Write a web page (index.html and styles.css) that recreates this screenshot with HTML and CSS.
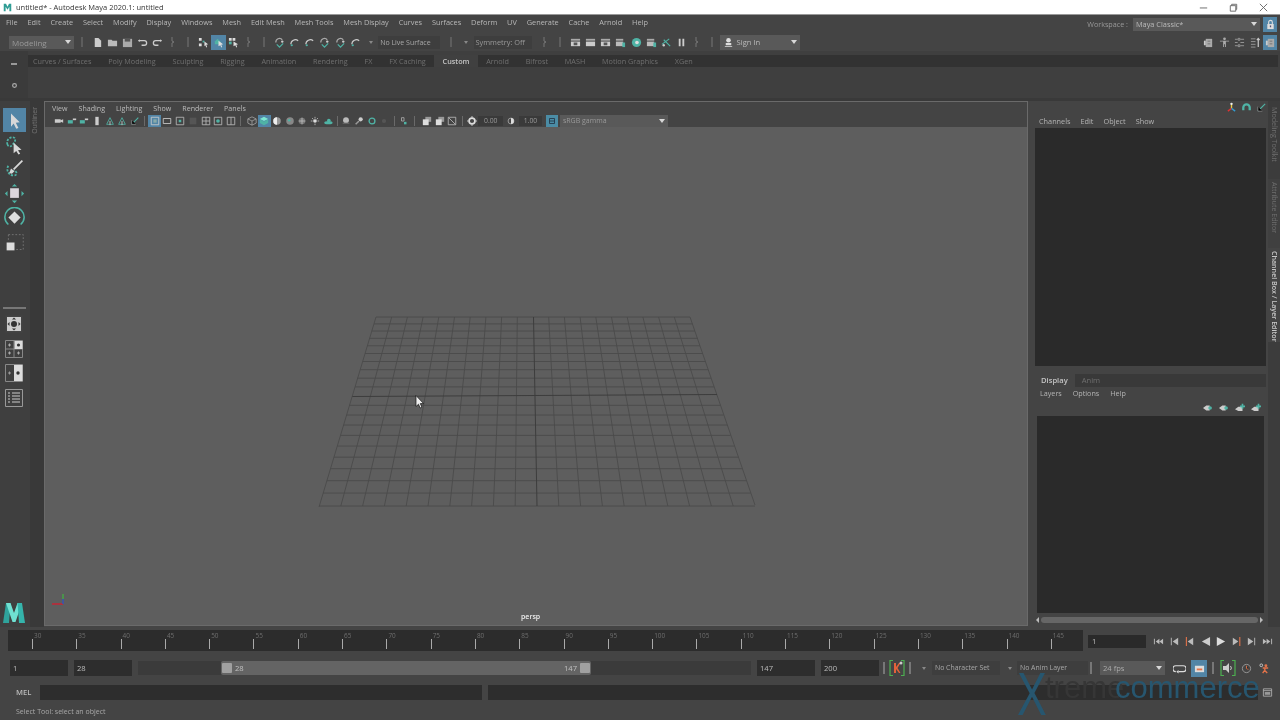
FILE: index.html
```html
<!DOCTYPE html>
<html lang="en">
<head>
<meta charset="utf-8">
<title>untitled* - Autodesk Maya 2020.1: untitled</title>
<link rel="stylesheet" href="styles.css">
</head>
<body>
<svg class="defs" aria-hidden="true">
  <symbol id="file" viewBox="0 0 12 12"><path fill="#ccc" d="M3 1h4l3 3v7H3z"/></symbol>
  <symbol id="open" viewBox="0 0 12 12"><path fill="#bbb" d="M1 3h4l1 1h5v6H1z"/></symbol>
  <symbol id="save" viewBox="0 0 12 12"><path fill="#aaa" d="M1 2h10v9H1z"/><path fill="#555" d="M3 2h6v3H3z"/></symbol>
  <symbol id="undo" viewBox="0 0 12 12"><path fill="none" stroke="#ccc" stroke-width="1.4" d="M2 4h6a2.5 2.5 0 0 1 0 5H5"/><path fill="#ccc" d="M1 4l2-1.5v3z"/></symbol>
  <symbol id="redo" viewBox="0 0 12 12"><path fill="none" stroke="#ccc" stroke-width="1.4" d="M10 4H4a2.5 2.5 0 0 0 0 5h3"/><path fill="#ccc" d="M11 4L9 2.5v3z"/></symbol>
  <symbol id="sep" viewBox="0 0 6 12"><path stroke="#777" stroke-width="1" d="M3 1v10"/></symbol>
  <symbol id="hnd" viewBox="0 0 6 12"><path fill="none" stroke="#777" stroke-width="1" d="M2 1v4l2 1-2 1v4"/></symbol>
  <symbol id="hier" viewBox="0 0 12 12"><path fill="#ddd" d="M1 1h3v3H1zM1 7h3v3H1z"/><path fill="#4fb3a5" d="M5 4h2v2H5z"/><path fill="#ddd" d="M7 5l4 3-2 .5 1 2.500-1 .5-1-2.500-1 1z"/></symbol>
  <symbol id="objs" viewBox="0 0 12 12"><path fill="#4fb3a5" d="M2 5l3-3 3 3v3H2z"/><path fill="#ddd" d="M6 4l5 4-2 .5 1 2.500-1 .5-1-2.500-2 1z"/></symbol>
  <symbol id="comp" viewBox="0 0 12 12"><path fill="#ddd" d="M1 1h3v3H1zM5 1h3v3H5z"/><path fill="#4fb3a5" d="M1 5h3v3H1z"/><path fill="#ddd" d="M6 5l5 3-2 .5 1 2.500-1 .5-1-2.500-2 1z"/></symbol>
  <symbol id="snap" viewBox="0 0 12 12"><path fill="none" stroke="#aaa" stroke-width="1.300" d="M2 6a4 4 0 0 1 7-3"/><path fill="none" stroke="#4fb3a5" stroke-width="1.300" d="M3 8l3 3 4-4"/><circle cx="9" cy="5" r="1.300" fill="#ccc"/></symbol>
  <symbol id="snap2" viewBox="0 0 12 12"><path fill="none" stroke="#ccc" stroke-width="1.300" d="M2 8a5 5 0 0 1 8-4"/><circle cx="3" cy="9" r="1.200" fill="#4fb3a5"/></symbol>
  <symbol id="rend" viewBox="0 0 12 12"><path fill="#aaa" d="M1 2h10v2H1z"/><path fill="#ccc" d="M1 5h10v5H1z"/><path fill="#555" d="M4 6h4v3H4z"/></symbol>
  <symbol id="rend2" viewBox="0 0 12 12"><path fill="#aaa" d="M1 2h10v2H1z"/><path fill="#ccc" d="M1 5h10v5H1z"/></symbol>
  <symbol id="rend3" viewBox="0 0 12 12"><path fill="#aaa" d="M1 2h8v2H1z"/><path fill="#bbb" d="M1 5h8v5H1z"/><path fill="#4fb3a5" d="M8 6h3v5H8z"/></symbol>
  <symbol id="ipr" viewBox="0 0 12 12"><circle cx="6" cy="6" r="5" fill="#4fb3a5"/><circle cx="6.500" cy="6" r="2" fill="#ddd"/></symbol>
  <symbol id="scis" viewBox="0 0 12 12"><path stroke="#4fb3a5" stroke-width="1.200" fill="none" d="M1 8l8-6M3 3l7 7"/><circle cx="3" cy="9" r="1.300" fill="#ccc"/></symbol>
  <symbol id="pause" viewBox="0 0 12 12"><path fill="#ccc" d="M3 2h2v8H3zM7 2h2v8H7z"/></symbol>
  <symbol id="cam" viewBox="0 0 12 12"><path fill="#ccc" d="M1 4h7v4H1zM8 5l3-1v4L8 7z"/></symbol>
  <symbol id="cam2" viewBox="0 0 12 12"><path fill="#4fb3a5" d="M1 5h6v4H1z"/><path fill="#ccc" d="M7 3h4v2H7z"/></symbol>
  <symbol id="bkm" viewBox="0 0 12 12"><path fill="#ccc" d="M4 1h4v10H4z"/></symbol>
  <symbol id="grid" viewBox="0 0 12 12"><path fill="none" stroke="#4fb3a5" stroke-width="1" d="M2 10l4-8 4 8z"/><path stroke="#ccc" d="M6 6v5"/></symbol>
  <symbol id="box" viewBox="0 0 12 12"><path fill="none" stroke="#ccc" stroke-width="1" d="M1.500 1.500h9v9h-9z"/><path fill="#8aa" d="M4 4h4v4H4z"/></symbol>
  <symbol id="box2" viewBox="0 0 12 12"><path fill="none" stroke="#ccc" stroke-width="1" d="M1.500 3h9v6h-9z"/></symbol>
  <symbol id="box3" viewBox="0 0 12 12"><path fill="none" stroke="#bbb" stroke-width="1" d="M1.500 1.500h9v9h-9z"/><path fill="#4fb3a5" d="M4.500 4.500h3v3h-3z"/></symbol>
  <symbol id="box4" viewBox="0 0 12 12"><path fill="#555" d="M2 2h8v8H2z"/></symbol>
  <symbol id="box5" viewBox="0 0 12 12"><path fill="none" stroke="#bbb" stroke-width="1" d="M1.500 1.500h9v9h-9zM6 1.500v9M1.500 6h9"/></symbol>
  <symbol id="box6" viewBox="0 0 12 12"><path fill="none" stroke="#bbb" stroke-width="1" d="M1.500 1.500h9v9h-9z"/><circle cx="6" cy="6" r="2.200" fill="#4fb3a5"/></symbol>
  <symbol id="box7" viewBox="0 0 12 12"><path fill="none" stroke="#bbb" stroke-width="1" d="M1.500 1.500h9v9h-9zM6 1.500v9"/></symbol>
  <symbol id="wire" viewBox="0 0 12 12"><path fill="none" stroke="#aaa" stroke-width=".9" d="M6 1l5 2.500v5L6 11 1 8.500v-5zM1 3.500l5 2.500 5-2.500M6 6v5"/></symbol>
  <symbol id="cube" viewBox="0 0 12 12"><path fill="#8fd" fill-opacity=".8" d="M6 1l5 2.500-5 2.500-5-2.500z"/><path fill="#4fb3a5" d="M1 4l5 2.500V11L1 8.500zM11 4L6 6.500V11l5-2.500z"/></symbol>
  <symbol id="ball" viewBox="0 0 12 12"><circle cx="6" cy="6" r="4.500" fill="#999"/><path fill="#eee" d="M6 1.500a4.500 4.500 0 0 0 0 9z"/></symbol>
  <symbol id="ball2" viewBox="0 0 12 12"><circle cx="6" cy="6" r="4.500" fill="#888"/><circle cx="5" cy="5" r="1.500" fill="#4fb3a5"/></symbol>
  <symbol id="ball3" viewBox="0 0 12 12"><circle cx="6" cy="6" r="4" fill="#777"/><path stroke="#bbb" d="M2 6h8M6 2v8"/></symbol>
  <symbol id="lamp" viewBox="0 0 12 12"><circle cx="6" cy="6" r="2.200" fill="#ddd"/><path stroke="#ddd" stroke-width=".8" d="M6 1v2M6 9v2M1 6h2M9 6h2M2.500 2.500l1.500 1.500M9.500 2.500L8 4"/></symbol>
  <symbol id="shad" viewBox="0 0 12 12"><ellipse cx="6.500" cy="8" rx="5" ry="2" fill="#4fb3a5"/><circle cx="7" cy="5.500" r="2.200" fill="#4fb3a5"/></symbol>
  <symbol id="glob" viewBox="0 0 12 12"><circle cx="6" cy="5" r="3.500" fill="#bbb"/><path fill="#666" d="M2 8h8v1.500H2z"/></symbol>
  <symbol id="drop" viewBox="0 0 12 12"><circle cx="8" cy="4" r="2.500" fill="#ccc"/><path stroke="#999" stroke-width="1.800" d="M2 10l4-4"/></symbol>
  <symbol id="ring" viewBox="0 0 12 12"><circle cx="6" cy="6" r="3.500" fill="none" stroke="#4fb3a5" stroke-width="1.600"/></symbol>
  <symbol id="dim" viewBox="0 0 12 12"><circle cx="6" cy="6" r="2.500" fill="#555"/></symbol>
  <symbol id="iso" viewBox="0 0 12 12"><path fill="none" stroke="#aaa" d="M3 2h3v4H3z"/><path fill="#4fb3a5" d="M6 7h3v3H6z"/></symbol>
  <symbol id="dup" viewBox="0 0 12 12"><path fill="#999" d="M4 1h7v6H4z"/><path fill="#ddd" d="M1 4h7v7H1z"/></symbol>
  <symbol id="nosq" viewBox="0 0 12 12"><path fill="none" stroke="#bbb" d="M1.500 1.500h9v9h-9zM2 2l8 8"/></symbol>
  <symbol id="sun" viewBox="0 0 12 12"><circle cx="6" cy="6" r="3.500" fill="none" stroke="#ddd" stroke-width="2"/><path stroke="#ddd" d="M6 0v2M6 10v2M0 6h2M10 6h2"/></symbol>
  <symbol id="half" viewBox="0 0 12 12"><circle cx="6" cy="6" r="3.500" fill="none" stroke="#aaa" stroke-width="1"/><path fill="#ddd" d="M6 2.500a3.500 3.500 0 0 1 0 7z"/></symbol>
  <symbol id="gam" viewBox="0 0 12 12"><path fill="none" stroke="#234" stroke-width="1" d="M3 3h6v6H3zM3 6h6"/></symbol>
  <symbol id="user" viewBox="0 0 12 12"><circle cx="6" cy="3.500" r="2.500" fill="#ddd"/><path fill="#ddd" d="M3 6.500h6V9H3zM2 10h8v1H2z"/></symbol>
  <symbol id="lock" viewBox="0 0 12 12"><path fill="none" stroke="#ddd" stroke-width="1.200" d="M4 6V3.500a2 2 0 0 1 4 0V6"/><path fill="#ddd" d="M2.500 5.500h7V11h-7z"/><path fill="#557" d="M5.300 7h1.400v2H5.300z"/></symbol>
  <symbol id="body" viewBox="0 0 12 12"><circle cx="6" cy="2" r="1.500" fill="#aaa"/><path fill="#aaa" d="M1 4h10v1H7.500v6h-1V8h-1v3h-1V5H1z"/></symbol>
  <symbol id="mod" viewBox="0 0 12 12"><path fill="#aaa" d="M3 2h7v9H3z"/><path fill="#666" d="M5 4h3v1H5zM5 7h3v1H5z"/><path fill="#ccc" d="M1 4h2v5H1z"/></symbol>
  <symbol id="lst" viewBox="0 0 12 12"><path stroke="#999" fill="none" d="M1 2.500h3M7 2.500h4M1 6h3M7 6h4M1 9.500h3M7 9.500h4M4.500 1.500h2v2h-2zM4.500 8.500h2v2h-2z"/></symbol>
  <symbol id="lst2" viewBox="0 0 12 12"><path stroke="#999" fill="none" d="M1 2h5M1 5h5M1 8h5M1 11h5"/><path stroke="#ccc" stroke-width="1.300" d="M9 11V2M7.500 3.500L9 1.500l1.500 2"/></symbol>
  <symbol id="xyz" viewBox="0 0 12 12"><path stroke="#e8c84a" stroke-width="1.500" d="M6 2v5"/><path stroke="#d33" stroke-width="1.500" d="M6 7l-4 3"/><path stroke="#39c" stroke-width="1.500" d="M6 7l4 3"/><circle cx="6" cy="2" r="1.300" fill="#eee"/></symbol>
  <symbol id="arc" viewBox="0 0 12 12"><path fill="none" stroke="#4fb3a5" stroke-width="2.500" d="M2.500 9V6a3.500 3.500 0 0 1 7 0v3"/></symbol>
  <symbol id="slash" viewBox="0 0 12 12"><path stroke="#4fb3a5" stroke-width="1.300" d="M2 10l8-8"/><path stroke="#888" d="M2 5v5h5"/></symbol>
  <symbol id="lay" viewBox="0 0 12 12"><path fill="#ccc" d="M0 6l4-3h4v6H4z"/><circle cx="8.500" cy="6" r="2.200" fill="#4fb3a5"/></symbol>
  <symbol id="lay2" viewBox="0 0 12 12"><path fill="#ccc" d="M0 7.500l4-3h5v5H4z"/><path fill="#4fb3a5" d="M8 1h2v2h2v2h-2v2H8V5H6V3h2z"/></symbol>
  <symbol id="first" viewBox="0 0 12 12"><path fill="#bbb" d="M1 3h1v6H1zM7 3v6L3 6zM11 3v6L7 6z"/></symbol>
  <symbol id="prevk" viewBox="0 0 12 12"><path fill="#bbb" d="M2 2h1v8H2zM10 2v8L4 6z"/></symbol>
  <symbol id="prevo" viewBox="0 0 12 12"><path fill="#e2734a" d="M2 1h1.200v10H2z"/><path fill="#bbb" d="M10 2v8L4 6z"/></symbol>
  <symbol id="back" viewBox="0 0 12 12"><path fill="#ccc" d="M11 1v10L2 6z"/></symbol>
  <symbol id="play" viewBox="0 0 12 12"><path fill="#ddd" d="M2 1v10l9-5z"/></symbol>
  <symbol id="nexto" viewBox="0 0 12 12"><path fill="#e2734a" d="M9 1h1.200v10H9z"/><path fill="#bbb" d="M2 2v8l6-4z"/></symbol>
  <symbol id="nextk" viewBox="0 0 12 12"><path fill="#bbb" d="M9 2h1v8H9zM2 2v8l6-4z"/></symbol>
  <symbol id="last" viewBox="0 0 12 12"><path fill="#bbb" d="M10 3h1v6h-1zM1 3v6l4-3zM5 3v6l4-3z"/></symbol>
  <symbol id="key" viewBox="0 0 18 18"><path fill="none" stroke="#4caf50" stroke-width="1.200" d="M5 1.500H2v15h3M13 1.500h3v15h-3"/><path fill="#e2623a" d="M6 4h2v4l3-4h1.500l-3 5 3 5H11L8 10v4H6z"/><circle cx="13" cy="4" r="1.500" fill="#ccc"/></symbol>
  <symbol id="audio" viewBox="0 0 18 18"><path fill="none" stroke="#4caf50" stroke-width="1.200" d="M5 1.500H2v15h3M13 1.500h3v15h-3"/><path fill="#ccc" d="M4 7h3l3-3v10l-3-3H4z"/><path fill="none" stroke="#ccc" d="M11.500 7a3 3 0 0 1 0 4"/></symbol>
  <symbol id="loop" viewBox="0 0 14 12"><path fill="none" stroke="#ddd" stroke-width="1.300" d="M3 9.500a2.500 2.500 0 0 1 0-6.500h8a2.500 2.500 0 0 1 0 6.500H6"/><path fill="#ddd" d="M6 7.500v4L3.500 9.500z"/></symbol>
  <symbol id="cach" viewBox="0 0 12 12"><path fill="#ddd" d="M1 3h10v7H1z"/><path fill="#e2734a" d="M3 6h6v2H3z"/></symbol>
  <symbol id="clock" viewBox="0 0 12 12"><circle cx="6" cy="6" r="4.500" fill="none" stroke="#999"/><path stroke="#e2734a" d="M6 3v3l2 1"/></symbol>
  <symbol id="run" viewBox="0 0 12 12"><circle cx="2.500" cy="2.500" r="1.500" fill="none" stroke="#ccc"/><circle cx="7.500" cy="3" r="1.600" fill="#e2734a"/><path stroke="#e2734a" stroke-width="1.500" d="M7 5l-1 3-2 3M6 8l3 3M4 5.500h6"/></symbol>
  <symbol id="win" viewBox="0 0 12 12"><path fill="none" stroke="#aaa" d="M1.500 2h9v8h-9zM1.500 4h9"/><path fill="#999" d="M3 5.500h6v3H3z"/></symbol>
</svg>

<div class="app">
  <header class="title">
    <svg class="t-ico" viewBox="0 0 12 12"><path fill="#2f9d95" d="M1 1h3l2 4 2-4h3v10H8.500V5L6 9 3.500 5v6H1z"/></svg>
    <span class="t-text">untitled* - Autodesk Maya 2020.1: untitled</span>
    <div class="win-btns">
      <svg viewBox="0 0 12 12"><path stroke="#666" d="M2 6.500h8"/></svg>
      <svg viewBox="0 0 12 12"><path fill="none" stroke="#666" d="M2.500 4h6v6h-6zM4 4V2.500h5.500V8H8.500"/></svg>
      <svg viewBox="0 0 12 12"><path stroke="#666" d="M2 2l8 8M10 2l-8 8"/></svg>
    </div>
  </header>

  <nav class="menu">
    <span>File</span><span>Edit</span><span>Create</span><span>Select</span><span>Modify</span><span>Display</span><span>Windows</span><span>Mesh</span><span>Edit Mesh</span><span>Mesh Tools</span><span>Mesh Display</span><span>Curves</span><span>Surfaces</span><span>Deform</span><span>UV</span><span>Generate</span><span>Cache</span><span>Arnold</span><span>Help</span>
    <div class="workspace">
      <span class="ws-label">Workspace :</span>
      <div class="combo ws-combo"><span>Maya Classic*</span><i class="caret"></i></div>
      <div class="act lock-btn"><svg class="ic"><use href="#lock"/></svg></div>
    </div>
  </nav>

  <div class="status">
    <div class="combo mode"><span>Modeling</span><i class="caret"></i></div>
    <div class="cell"><svg class="tk"><use href="#sep"/></svg></div>
    <div class="cell"><svg class="ic"><use href="#file"/></svg></div>
    <div class="cell"><svg class="ic"><use href="#open"/></svg></div>
    <div class="cell"><svg class="ic"><use href="#save"/></svg></div>
    <div class="cell"><svg class="ic"><use href="#undo"/></svg></div>
    <div class="cell"><svg class="ic"><use href="#redo"/></svg></div>
    <div class="cell"><svg class="tk"><use href="#hnd"/></svg></div>
    <div class="cell"><svg class="tk"><use href="#sep"/></svg></div>
    <div class="cell"><svg class="ic"><use href="#hier"/></svg></div>
    <div class="cell on"><svg class="ic"><use href="#objs"/></svg></div>
    <div class="cell"><svg class="ic"><use href="#comp"/></svg></div>
    <div class="cell"><svg class="tk"><use href="#hnd"/></svg></div>
    <div class="cell"><svg class="tk"><use href="#sep"/></svg></div>
    <div class="cell"><svg class="ic"><use href="#snap"/></svg></div>
    <div class="cell"><svg class="ic"><use href="#snap2"/></svg></div>
    <div class="cell"><svg class="ic"><use href="#snap2"/></svg></div>
    <div class="cell"><svg class="ic"><use href="#snap"/></svg></div>
    <div class="cell"><svg class="ic"><use href="#snap"/></svg></div>
    <div class="cell"><svg class="ic"><use href="#snap2"/></svg></div>
    <div class="cell"><i class="caret dim"></i></div>
    <div class="mini-drop"><span class="live">No Live Surface</span></div>
    <div class="cell"><svg class="tk"><use href="#sep"/></svg></div>
    <div class="cell"><i class="caret dim"></i></div>
    <div class="sym">Symmetry: Off</div>
    <div class="cell"><svg class="tk"><use href="#hnd"/></svg></div>
    <div class="cell"><svg class="tk"><use href="#sep"/></svg></div>
    <div class="cell"><svg class="ic"><use href="#rend"/></svg></div>
    <div class="cell"><svg class="ic"><use href="#rend2"/></svg></div>
    <div class="cell"><svg class="ic"><use href="#rend"/></svg></div>
    <div class="cell"><svg class="ic"><use href="#rend3"/></svg></div>
    <div class="cell"><svg class="ic"><use href="#ipr"/></svg></div>
    <div class="cell"><svg class="ic"><use href="#rend3"/></svg></div>
    <div class="cell"><svg class="ic"><use href="#scis"/></svg></div>
    <div class="cell"><svg class="ic"><use href="#pause"/></svg></div>
    <div class="cell"><svg class="tk"><use href="#hnd"/></svg></div>
    <div class="cell"><svg class="tk"><use href="#sep"/></svg></div>
    <div class="combo signin"><svg class="ic"><use href="#user"/></svg><span>Sign In</span><i class="caret"></i></div>
    <div class="status-right">
      <div class="cell-r"><svg class="ic"><use href="#mod"/></svg></div>
      <div class="cell-r"><svg class="ic"><use href="#body"/></svg></div>
      <div class="cell-r"><svg class="ic"><use href="#lst"/></svg></div>
      <div class="cell-r"><svg class="ic"><use href="#lst2"/></svg></div>
      <div class="act lock-btn"><svg class="ic"><use href="#mod"/></svg></div>
    </div>
  </div>

  <section class="shelf">
    <div class="shelf-side">
      <i class="minus"></i>
      <svg class="ic gear" viewBox="0 0 12 12"><circle cx="6" cy="6" r="2.500" fill="none" stroke="#aaa" stroke-width="1.600"/></svg>
    </div>
    <div class="shelf-main">
      <div class="tabs">
        <span>Curves / Surfaces</span><span>Poly Modeling</span><span>Sculpting</span><span>Rigging</span><span>Animation</span><span>Rendering</span><span>FX</span><span>FX Caching</span><span class="cur">Custom</span><span>Arnold</span><span>Bifrost</span><span>MASH</span><span>Motion Graphics</span><span>XGen</span>
      </div>
    </div>
  </section>

  <main class="work">
    <aside class="tools">
      <div class="tool act"><svg viewBox="0 0 24 24"><path fill="#d8d8d8" d="M8 4l10 10-4.500.5 3 6-2.500 1-3-6L8 19z"/></svg></div>
      <div class="tool"><svg viewBox="0 0 24 24"><path fill="none" stroke="#4fb3a5" stroke-width="2" stroke-dasharray="2.500 1.500" d="M4 12c-2-5 3-9 7-8 3 1 2 5-1 8-2 3-5 3-6 0z"/><path fill="#d8d8d8" d="M11 10l9 8-4 .5 2.500 4-2 1-2.500-4-3 2.500z"/></svg></div>
      <div class="tool"><svg viewBox="0 0 24 24"><path fill="none" stroke="#4fb3a5" stroke-width="2" stroke-dasharray="2.500 1.500" d="M5 9c-3 4 0 11 6 11 5 0 4-5 0-6"/><path stroke="#d8d8d8" stroke-width="2" d="M21 3L11 13"/><path fill="#d8d8d8" d="M8 12l4 3-3 3-3-1z"/></svg></div>
      <div class="tool"><svg viewBox="0 0 24 24"><path fill="#dcd6dc" d="M7 6h10v11H7z"/><path fill="#4fb3a5" d="M12 1l3 3H9zM12 23l3-3H9zM1 12l3-3v6zM23 12l-3-3v6z"/></svg></div>
      <div class="tool"><svg viewBox="0 0 24 24"><path fill="none" stroke="#4fb3a5" stroke-width="1.800" d="M5 20A11 11 0 1 1 19 20"/><path fill="#ddd" d="M12 5l7 7-7 7-7-7z"/></svg></div>
      <div class="tool"><svg viewBox="0 0 24 24"><path fill="none" stroke="#777" stroke-dasharray="2 2" d="M5 3h17v17H12"/><path fill="none" stroke="#777" stroke-dasharray="2 2" d="M5 3v8"/><path fill="#ddd" d="M3 12h9v9H3z"/></svg></div>
      <div class="tool-rule"></div>
      <div class="lay-btn sel"><svg viewBox="0 0 20 20"><path fill="#444" d="M1.500 1.500h17v17h-17z"/><path fill="#ccc" d="M3 3h14v14H3z"/><circle cx="10" cy="10" r="3" fill="#333"/><path fill="#333" d="M10 3.500l2 2H8zM10 16.500l2-2H8zM3.500 10l2-2v4zM16.500 10l-2-2v4z"/></svg></div>
      <div class="lay-btn"><svg viewBox="0 0 20 20"><path fill="none" stroke="#888" d="M1.500 1.500h17v17h-17zM10 1.500v17M1.500 10h17"/><path fill="#ddd" d="M10.500 2h8v8h-8z"/><circle cx="14.500" cy="6" r="1.600" fill="#333"/><path stroke="#aaa" d="M4 6h3M5.500 4.500v3M4 14h3M5.500 12.500v3M13 14h3M14.500 12.500v3"/></svg></div>
      <div class="lay-btn"><svg viewBox="0 0 20 20"><path fill="none" stroke="#888" d="M1.500 1.500h17v17h-17z"/><path fill="#ddd" d="M10 2h8.500v16H10z"/><circle cx="14" cy="10" r="1.700" fill="#333"/><path stroke="#999" d="M4 10h3M5.500 8.500v3"/></svg></div>
      <div class="lay-btn"><svg viewBox="0 0 20 20"><path fill="none" stroke="#999" d="M1.500 1.500h17v17h-17z"/><path stroke="#ccc" d="M4 5h2M4 8h2M4 11h2M4 14h2M8 5h8M8 8h8M8 11h8M8 14h8"/></svg></div>
      <svg class="logo" viewBox="0 0 24 22"><path fill="#2fa39c" d="M1 21L4 1h4.500L7 21z"/><path fill="#6fe0d2" d="M4 1h4.500L12 11l3.500-10H20L13.500 20h-3z"/><path fill="#35b5ac" d="M15.500 1H20l3 20h-6z"/></svg>
    </aside>
    <div class="outliner"><span>Outliner</span></div>

    <div class="panel">
      <div class="pmenu"><span>View</span><span>Shading</span><span>Lighting</span><span>Show</span><span>Renderer</span><span>Panels</span></div>
      <div class="ptools">
        <div class="pc"><svg class="ic s"><use href="#cam"/></svg></div>
        <div class="pc"><svg class="ic s"><use href="#cam2"/></svg></div>
        <div class="pc"><svg class="ic s"><use href="#cam2"/></svg></div>
        <div class="pc"><svg class="ic s"><use href="#bkm"/></svg></div>
        <div class="pc"><svg class="ic s"><use href="#grid"/></svg></div>
        <div class="pc"><svg class="ic s"><use href="#grid"/></svg></div>
        <div class="pc"><svg class="ic s"><use href="#slash"/></svg></div>
        <div class="ps"></div>
        <div class="pc on"><svg class="ic s"><use href="#box"/></svg></div>
        <div class="pc"><svg class="ic s"><use href="#box2"/></svg></div>
        <div class="pc"><svg class="ic s"><use href="#box3"/></svg></div>
        <div class="pc"><svg class="ic s"><use href="#box4"/></svg></div>
        <div class="pc"><svg class="ic s"><use href="#box5"/></svg></div>
        <div class="pc"><svg class="ic s"><use href="#box6"/></svg></div>
        <div class="pc"><svg class="ic s"><use href="#box7"/></svg></div>
        <div class="ps w8"></div>
        <div class="pc"><svg class="ic s"><use href="#wire"/></svg></div>
        <div class="pc on2"><svg class="ic s"><use href="#cube"/></svg></div>
        <div class="pc"><svg class="ic s"><use href="#ball"/></svg></div>
        <div class="pc"><svg class="ic s"><use href="#ball2"/></svg></div>
        <div class="pc"><svg class="ic s"><use href="#ball3"/></svg></div>
        <div class="pc"><svg class="ic s"><use href="#lamp"/></svg></div>
        <div class="pc"><svg class="ic s"><use href="#shad"/></svg></div>
        <div class="ps w6"></div>
        <div class="pc"><svg class="ic s"><use href="#glob"/></svg></div>
        <div class="pc"><svg class="ic s"><use href="#drop"/></svg></div>
        <div class="pc"><svg class="ic s"><use href="#ring"/></svg></div>
        <div class="pc"><svg class="ic s"><use href="#dim"/></svg></div>
        <div class="ps"></div>
        <div class="pc"><svg class="ic s"><use href="#iso"/></svg></div>
        <div class="ps w10"></div>
        <div class="pc"><svg class="ic s"><use href="#dup"/></svg></div>
        <div class="pc"><svg class="ic s"><use href="#dup"/></svg></div>
        <div class="pc"><svg class="ic s"><use href="#nosq"/></svg></div>
        <div class="ps"></div>
        <div class="pc"><svg class="ic s"><use href="#sun"/></svg></div>
        <div class="pin p1">0.00</div>
        <div class="pc"><svg class="ic s"><use href="#half"/></svg></div>
        <div class="pin p2">1.00</div>
        <div class="gam"><svg class="ic s"><use href="#gam"/></svg></div>
        <div class="combo gamma"><span>sRGB gamma</span><i class="caret"></i></div>
      </div>
      <div class="view">
        <svg class="floor" viewBox="45 127 982 498" preserveAspectRatio="none">
          <path fill="none" stroke="#4b4b4b" stroke-width=".9" d="M376 317L319 507M391.700 317L340.800 506M407.400 317L362.600 506M423.100 317L384.400 506M438.800 317L406.200 506M454.500 317L428 506M470.200 317L449.800 506M485.900 317L471.600 506M501.600 317L493.400 506M517.300 317L515.200 506M548.700 317L558.800 506M564.400 317L580.600 506M580.100 317L602.400 506M595.800 317L624.200 506M611.500 317L646 506M627.200 317L667.800 506M642.900 317L689.600 506M658.600 317L711.400 506M674.300 317L733.200 506M690 317L755 505M376 317H690M374 323.900H692.400M371.800 331H694.800M369.600 338.300H697.300M367.400 345.800H699.900M365 353.500H702.600M362.700 361.500H705.300M360.200 369.700H708.100M357.600 378.200H711M355 386.900H714M349.500 405.300H720.400M346.600 415H723.700M343.600 425H727.200M340.500 435.400H730.700M337.300 446.100H734.400M333.900 457.200H738.200M330.500 468.700H742.200M326.900 480.700H746.300M323.200 493.100H750.600M319.300 506H755"/>
          <path fill="none" stroke="#3d3d3d" stroke-width="1" d="M533.500 317L537 506M352.300 396.500L717 394.500"/>
          <path fill="none" stroke="#c23" stroke-width="1.400" d="M52 604h11"/>
          <path fill="none" stroke="#35b" stroke-width="1.400" d="M63 604v-5"/>
          <path fill="none" stroke="#4a4" stroke-width="1.400" d="M63 599v-5"/>
          <path fill="#eee" stroke="#111" stroke-width=".7" d="M416 395.500v11l2.500-2.300 1.600 3.800 1.800-.8-1.600-3.600h3.300z"/>
        </svg>
        <span class="persp">persp</span>
      </div>
    </div>

    <aside class="right">
      <div class="r-icons"><svg class="ic"><use href="#xyz"/></svg><svg class="ic"><use href="#arc"/></svg><svg class="ic"><use href="#slash"/></svg></div>
      <div class="r-menu"><span>Channels</span><span>Edit</span><span>Object</span><span>Show</span></div>
      <div class="channel"></div>
      <div class="layer">
        <div class="l-tabs"><span class="cur">Display</span><span>Anim</span></div>
        <div class="l-menu"><span>Layers</span><span>Options</span><span>Help</span></div>
        <div class="l-icons"><svg class="ic"><use href="#lay"/></svg><svg class="ic"><use href="#lay"/></svg><svg class="ic"><use href="#lay2"/></svg><svg class="ic"><use href="#lay2"/></svg></div>
        <div class="l-list"></div>
        <div class="scroll"><i class="arr-l"></i><div class="thumb"></div><i class="arr-r"></i></div>
      </div>
    </aside>
    <div class="side">
      <span class="st-1">Modeling Toolkit</span>
      <span class="st-2">Attribute Editor</span>
      <span class="st-3">Channel Box / Layer Editor</span>
    </div>
  </main>

  <div class="time">
    <div class="slider">
      <div class="tc"><b>30</b><i></i></div><div class="tc"><b>35</b><i></i></div><div class="tc"><b>40</b><i></i></div><div class="tc"><b>45</b><i></i></div><div class="tc"><b>50</b><i></i></div><div class="tc"><b>55</b><i></i></div><div class="tc"><b>60</b><i></i></div><div class="tc"><b>65</b><i></i></div><div class="tc"><b>70</b><i></i></div><div class="tc"><b>75</b><i></i></div><div class="tc"><b>80</b><i></i></div><div class="tc"><b>85</b><i></i></div><div class="tc"><b>90</b><i></i></div><div class="tc"><b>95</b><i></i></div><div class="tc"><b>100</b><i></i></div><div class="tc"><b>105</b><i></i></div><div class="tc"><b>110</b><i></i></div><div class="tc"><b>115</b><i></i></div><div class="tc"><b>120</b><i></i></div><div class="tc"><b>125</b><i></i></div><div class="tc"><b>130</b><i></i></div><div class="tc"><b>135</b><i></i></div><div class="tc"><b>140</b><i></i></div><div class="tc"><b>145</b><i></i></div>
    </div>
    <div class="cur-time">1</div>
    <div class="trans">
      <svg class="ic"><use href="#first"/></svg><svg class="ic"><use href="#prevk"/></svg><svg class="ic"><use href="#prevo"/></svg><svg class="ic"><use href="#back"/></svg><svg class="ic"><use href="#play"/></svg><svg class="ic"><use href="#nexto"/></svg><svg class="ic"><use href="#nextk"/></svg><svg class="ic"><use href="#last"/></svg>
    </div>
  </div>

  <div class="range">
    <div class="fld">1</div>
    <div class="fld">28</div>
    <div class="bar">
      <div class="thumbbar"><i></i><span>28</span><em></em><span>147</span><i></i></div>
    </div>
    <div class="fld">147</div>
    <div class="fld">200</div>
    <div class="r-tail">
      <i class="vs"></i>
      <svg class="big k"><use href="#key"/></svg>
      <i class="vs"></i>
      <i class="caret dim m-a"></i>
      <span class="rt t1">No Character Set</span>
      <i class="caret dim m-b"></i>
      <span class="rt t2">No Anim Layer</span>
      <i class="vs"></i>
      <div class="combo fps"><span>24 fps</span><i class="caret"></i></div>
      <svg class="ic loop"><use href="#loop"/></svg>
      <div class="act cache"><svg class="ic"><use href="#cach"/></svg></div>
      <i class="vs"></i>
      <svg class="big"><use href="#audio"/></svg>
      <svg class="ic"><use href="#clock"/></svg>
      <svg class="ic"><use href="#run"/></svg>
    </div>
  </div>

  <div class="cmd">
    <span class="mel">MEL</span>
    <div class="cmd-in a"></div>
    <div class="cmd-in b"></div>
    <svg class="ic"><use href="#win"/></svg>
  </div>

  <div class="help">Select Tool: select an object</div>

  <div class="mark" aria-hidden="true"><span class="mx">X</span><span class="mt">treme</span><span class="mc">commerce</span></div>
</div>
</body>
</html>
```
FILE: styles.css
```css
* { box-sizing: border-box; }
html, body { margin: 0; height: 100%; overflow: hidden; background: #444; }
body { font-family: "Open Sans", "Liberation Sans", sans-serif; font-size: 7.6px; color: #b4b4b4; }
.defs { display: none; }
.app { position: relative; width: 1280px; height: 720px; display: flex; flex-direction: column; background: #444; filter: blur(.45px); overflow: hidden; }
.ic { width: 11px; height: 11px; display: block; flex: none; }
.ic.s { width: 10px; height: 10px; }
.tk { width: 6px; height: 12px; display: block; }

.title { height: 15px; flex: none; background: #fff; display: flex; align-items: center; padding-left: 3px; color: #333; font-size: 7.500px; border-bottom: 1px solid #999; }
.t-ico { width: 9px; height: 9px; margin-right: 4px; }
.win-btns { margin-left: auto; display: flex; gap: 19px; padding-right: 11px; }
.win-btns svg { width: 11px; height: 11px; display: block; }

.menu { height: 18px; flex: none; display: flex; align-items: center; padding-left: 6px; padding-bottom: 4px; gap: 9.900px; color: #b8b8b8; font-size: 7.350px; }
.workspace { margin-left: auto; display: flex; align-items: center; margin-bottom: -4px; }
.ws-label { color: #999; margin-right: 5px; font-size: 7.200px; }
.combo { display: flex; align-items: center; background: #595959; color: #bbb; }
.combo span { padding-left: 3px; }
.caret { display: block; width: 0; height: 0; border: 3.5px solid transparent; border-top: 4px solid #d8d8d8; border-bottom: 0; flex: none; }
.caret.dim { border-top-color: #888; border-width: 2.500px; border-top-width: 3px; border-bottom-width: 0; }
.combo .caret { margin-left: auto; margin-right: 3px; }
.ws-combo { width: 127px; height: 13px; margin-right: 3px; }
.act { background: #5285a6; }
.lock-btn { width: 14px; height: 15px; display: flex; align-items: center; justify-content: center; margin-right: 3px; }

.status { height: 18px; flex: none; display: flex; align-items: center; padding-left: 9px; }
.mode { width: 65.400px; height: 13px; color: #999; font-size: 8px; }
.cell { width: 15.200px; height: 15px; flex: none; display: flex; align-items: center; justify-content: center; }
.cell.on { background: #5285a6; }
.mini-drop { display: flex; align-items: center; width: 65px; }
.live { padding-left: 2px; background: #3e3e3e; height: 13px; line-height: 13px; width: 62px; font-size: 7px; color: #a8a8a8; }
.sym { width: 58px; margin-right: 5.800px; height: 13px; line-height: 13px; background: #3e3e3e; padding-left: 2px; color: #999; font-size: 7.400px; }
.signin { width: 80px; height: 15px; gap: 3px; color: #bbb; padding-left: 3px; }
.signin span { padding-left: 0; }
.status-right { margin-left: auto; display: flex; align-items: center; }
.cell-r { width: 15.600px; display: flex; justify-content: center; }

.shelf { height: 50px; flex: none; display: flex; padding-top: 4px; border-bottom: 3px solid #393939; background: #3f3f3f; }
.shelf-side { width: 28px; flex: none; display: flex; flex-direction: column; align-items: center; gap: 16px; margin-top: -4px; padding-top: 12px; background: #3b3b3b; }
.minus { width: 6px; height: 2px; background: #999; display: block; }
.gear { width: 9px; height: 9px; }
.shelf-main { flex: 1; padding-right: 2px; }
.tabs { height: 12px; background: #323232; display: flex; align-items: center; color: #6f6f6f; font-size: 7.250px; }
.tabs span { padding: 0 8.400px; height: 12px; line-height: 12px; }
.tabs span:first-child { padding-left: 5px; }
.tabs .cur { background: #404040; color: #c4c4c4; font-weight: 600; }

.work { flex: 1; min-height: 0; display: flex; }
.tools { width: 30px; flex: none; display: flex; flex-direction: column; align-items: center; background: #3f3f3f; padding: 7px 2px 3px 0; }
.tool { width: 23px; height: 24.400px; flex: none; display: flex; align-items: center; justify-content: center; }
.tool.act { background: #5285a6; }
.tool svg { width: 21px; height: 21px; display: block; }
.tool-rule { width: 23px; height: 2px; background: #777; margin-top: 53px; margin-bottom: 5px; flex: none; }
.lay-btn { width: 20px; height: 20px; margin-bottom: 4.500px; flex: none; }
.lay-btn svg { width: 20px; height: 20px; display: block; }
.logo { width: 24px; height: 22px; margin-top: auto; flex: none; }
.outliner { width: 14px; flex: none; background: #393939; padding-top: 6px; }
.outliner span { writing-mode: vertical-rl; transform: rotate(180deg); font-size: 7px; color: #777; display: block; }

.panel { width: 984px; flex: none; display: flex; flex-direction: column; border: 1px solid #6a6a6a; background: #444; margin-bottom: 1px; }
.pmenu { height: 12px; flex: none; display: flex; align-items: center; padding-left: 7px; gap: 11px; color: #bbb; font-size: 7.100px; }
.ptools { height: 13px; flex: none; display: flex; align-items: center; padding-left: 7.650px; }
.pc { width: 12.700px; height: 12px; flex: none; display: flex; align-items: center; justify-content: center; }
.pc.on { background: #5285a6; }
.pc.on2 { background: #5285a6; }
.ps { width: 7px; height: 10px; flex: none; }
.ps::after { content: ""; display: block; width: 1px; height: 10px; background: #6a6a6a; margin-left: 3px; }
.w8 { width: 8px; }
.w6 { width: 6px; }
.w10 { width: 10px; }
.pin { height: 10px; line-height: 10px; background: #3a3a3a; color: #999; font-size: 6.800px; text-align: center; flex: none; }
.p1 { width: 25px; margin-left: 0; margin-right: 1.500px; }
.p2 { width: 23px; margin-left: 1.500px; margin-right: 4px; }
.gam { width: 12px; height: 12px; background: #4b8ca5; display: flex; align-items: center; justify-content: center; flex: none; margin-right: 2px; }
.gamma { width: 108px; height: 12px; font-size: 7px; color: #999; }

.view { flex: 1; position: relative; background: #5e5e5e; overflow: hidden; }
.floor { position: absolute; inset: 0; width: 100%; height: 100%; display: block; }
.persp { position: absolute; left: 476px; bottom: 4px; color: #eee; font-size: 7px; font-weight: 600; }

.right { width: 240px; flex: none; display: flex; flex-direction: column; background: #444; padding-left: 7px; padding-right: 2px; }
.r-icons { height: 13px; flex: none; display: flex; gap: 4px; justify-content: flex-end; align-items: center; margin-right: -1px; }
.r-menu { height: 14px; flex: none; display: flex; align-items: center; gap: 10px; padding-left: 4px; color: #b4b4b4; font-size: 7.300px; }
.channel { height: 238px; flex: none; background: #2a2a2a; }
.layer { flex: 1; margin: 8px 0 1px -2px; display: flex; flex-direction: column; }
.l-tabs { height: 13px; flex: none; display: flex; background: #393939; }
.l-tabs span { padding: 0 7px; line-height: 13px; color: #6f6f6f; }
.l-tabs .cur { background: #444; color: #c4c4c4; font-weight: 600; padding-left: 8px; }
.l-menu { height: 12px; flex: none; display: flex; align-items: center; gap: 11px; padding-left: 7px; font-size: 7.200px; }
.l-icons { height: 17px; flex: none; display: flex; justify-content: flex-end; align-items: center; gap: 6px; padding-right: 5px; }
.l-icons .ic { width: 10px; height: 10px; }
.l-list { flex: 1; background: #2a2a2a; margin-left: 4px; margin-right: 2px; }
.scroll { height: 13px; flex: none; display: flex; align-items: center; padding: 0 3px; gap: 2px; }
.thumb { flex: 1; height: 6px; background: #666; border-radius: 3px; }
.arr-l, .arr-r { display: block; width: 0; height: 0; border: 3px solid transparent; }
.arr-l { border-right-color: #bbb; border-left-width: 0; }
.arr-r { border-left-color: #bbb; border-right-width: 0; }

.side { width: 12px; flex: none; display: flex; flex-direction: column; background: #3c3c3c; padding-top: 6px; }
.side span { writing-mode: vertical-rl; font-size: 7.100px; color: #6e6e6e; display: block; width: 12px; text-align: left; }
.st-1 { height: 72px; }
.st-2 { height: 69px; background: #404040; padding-top: 3px; }
.st-3 { color: #c8c8c8 !important; font-weight: 600; padding-top: 3px; background: #444; }

.time { height: 28px; flex: none; display: flex; align-items: center; }
.slider { width: 1075px; margin-left: 8px; height: 21px; background: #2c2c2c; display: flex; padding-left: 24px; margin-top: -1px; flex: none; }
.tc { width: 44.300px; flex: none; }
.tc b { display: block; font-weight: 400; font-size: 6.400px; color: #6e6e6e; height: 9px; line-height: 9px; padding-left: 2px; padding-top: 1px; }
.tc i { display: block; width: 1px; height: 10px; background: #aaa; }
.cur-time { width: 58px; height: 13px; margin-left: 5px; background: #2a2a2a; padding-left: 4px; line-height: 13px; color: #bbb; flex: none; }
.trans { display: flex; gap: 4.500px; margin-left: 7px; }

.range { height: 26px; flex: none; display: flex; align-items: center; padding-left: 10px; gap: 6px; }
.fld { width: 58px; height: 16px; line-height: 16px; background: #2d2d2d; color: #bbb; padding-left: 3px; flex: none; }
.bar { width: 613px; height: 14px; background: #3b3b3b; flex: none; padding-left: 83px; }
.thumbbar { width: 370px; height: 14px; background: #646464; display: flex; align-items: center; color: #c0c0c0; gap: 2px; border-radius: 2px; }
.thumbbar i { display: block; width: 10px; height: 10px; background: #a0a0a0; border-radius: 1px; flex: none; margin: 0 1px; }
.thumbbar em { flex: 1; }
.r-tail { display: flex; align-items: center; margin-left: -2px; height: 16px; }
.vs { display: block; width: 2px; height: 12px; background: #777; flex: none; }
.big { width: 18px; height: 18px; display: block; flex: none; margin: 0 4px 0 5px; }
.big.k { margin: 0 3px 0 3px; }
.m-a { margin: 0 6px 0 11px; }
.m-b { margin: 0 5px 0 8px; }
.rt { height: 14px; line-height: 14px; background: #3e3e3e; padding-left: 3px; flex: none; color: #a8a8a8; font-size: 6.900px; }
.t1 { width: 68px; }
.t2 { width: 71px; margin-right: 2px; }
.fps { width: 65px; height: 14px; margin: 0 8px; color: #aaa; flex: none; }
.loop { width: 13px; height: 11px; margin-right: 5px; }
.cache { width: 16px; height: 17px; display: flex; align-items: center; justify-content: center; margin-right: 5px; flex: none; }
.r-tail > .ic:last-child { margin-left: 7px; }

.cmd { height: 22px; flex: none; display: flex; align-items: center; padding-left: 16px; }
.mel { width: 24px; font-weight: 600; color: #bbb; flex: none; }
.cmd-in { height: 15px; background: #2d2d2d; flex: none; }
.a { width: 442px; margin-right: 6px; }
.b { width: 770px; margin-right: 4px; }

.help { height: 17px; flex: none; padding-left: 16px; line-height: 17px; color: #a8a8a8; font-size: 7px; }

.mark { position: absolute; left: 1017px; top: 668px; display: flex; align-items: flex-start; height: 52px; pointer-events: none; font-family: "Liberation Sans", sans-serif; }
.mx { font-size: 62px; color: #27566f; line-height: 52px; width: 28px; display: block; transform: scaleX(.72); transform-origin: left top; font-weight: 400; }
.mt { font-size: 31px; line-height: 40px; color: #363636; width: 70px; }
.mc { font-size: 31px; line-height: 40px; color: #27566f; }
```
